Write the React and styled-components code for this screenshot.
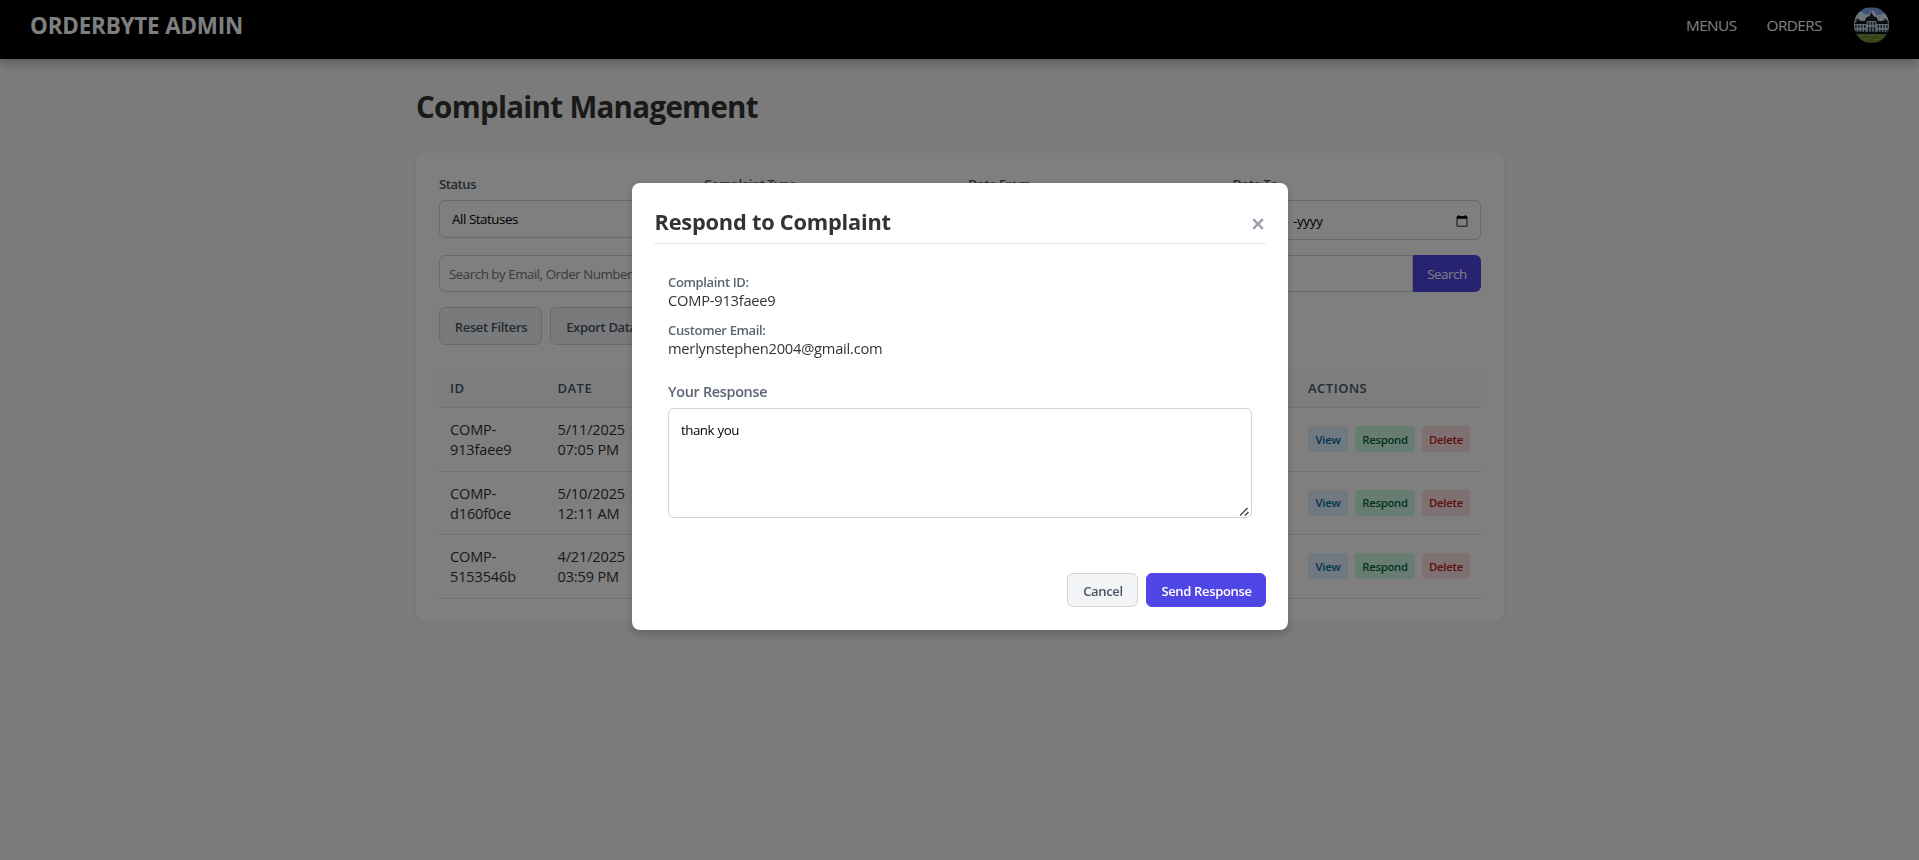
import React from "react";
import styled, { createGlobalStyle } from "styled-components";

const GlobalStyle = createGlobalStyle`
  * { box-sizing: border-box; }
  body {
    margin: 0;
    background: #f7f7f7;
    color: #333;
    font-family: "Open Sans", "Noto Sans", sans-serif;
    overflow: hidden;
  }
  button, input, textarea { font-family: inherit; }
`;

const Header = styled.header`
  display: flex;
  justify-content: space-between;
  height: 59px;
  padding: 7px 30px 16px;
  background: #000;
  box-shadow: 0 4px 10px rgba(0, 0, 0, 0.28);
`;

const Brand = styled.div`
  height: 36px;
  font-size: 22.4px;
  line-height: 38px;
  font-weight: 700;
  letter-spacing: -0.17px;
  color: #fff;
`;

const Nav = styled.nav`
  display: flex;
  align-items: center;
  height: 36px;
`;

const NavLink = styled.a`
  margin-right: ${(p) => p.$gap}px;
  font-size: 15.3px;
  letter-spacing: -0.55px;
  color: #fff;
`;

const Avatar = styled.svg`
  width: 35px;
  height: 36px;
  border-radius: 50%;
`;

const Page = styled.main`
  width: 1088px;
  margin: 0 auto;
  padding-top: 24px;
  position: relative;
  left: 0.5px;
`;

const Title = styled.h1`
  margin: 0 0 22px;
  height: 48px;
  font-size: 29.5px;
  line-height: 47px;
  font-weight: 700;
  letter-spacing: -0.7px;
  color: #333;
`;

const Card = styled.section`
  height: 468px;
  padding: 22px 23px 0;
  border-radius: 8px;
  background: #fff;
  box-shadow: 0 2px 4px rgba(0, 0, 0, 0.09);
`;

const Filters = styled.div`
  display: grid;
  grid-template-columns: repeat(4, 1fr);
  column-gap: 16px;
  height: 65px;
`;

const Field = styled.div`
  display: flex;
  flex-direction: column;
`;

const FieldLabel = styled.label`
  height: 25px;
  font-size: 13px;
  line-height: 18px;
  font-weight: 600;
  letter-spacing: -0.42px;
  color: #4b5563;
`;

const Control = styled.div`
  display: flex;
  align-items: center;
  justify-content: space-between;
  height: ${(p) => (p.$date ? 40 : 38)}px;
  padding: ${(p) => (p.$date ? "1px 12px 0 10px" : "0 12px 0 12px")};
  border: 1px solid #d1d5db;
  border-radius: 6px;
  font-size: 13.3px;
  letter-spacing: ${(p) => (p.$date ? -0.15 : -0.42)}px;
  color: #000;
`;

const DateYear = styled.span`
  margin-left: 5px;
  letter-spacing: -0.25px;
`;

const SearchRow = styled.div`
  display: flex;
  height: 37px;
  margin-top: 15px;
`;

const SearchInput = styled.input`
  flex: 1;
  padding: 0 9px;
  border: 1px solid #d1d5db;
  border-radius: 6px 0 0 6px;
  font-size: 13.3px;
  letter-spacing: -0.46px;
  outline: none;
  &::placeholder { color: #757575; }
`;

const SearchButton = styled.button`
  width: 68px;
  border: 0;
  border-radius: 0 6px 6px 0;
  background: #4f46e5;
  color: #fff;
  font-size: 13.3px;
  letter-spacing: -0.4px;
`;

const ButtonRow = styled.div`
  display: flex;
  gap: 8px;
  margin-top: 15px;
`;

const Button = styled.button`
  width: ${(p) => p.$width}px;
  height: ${(p) => p.$height || 38}px;
  padding: 2px 0 0 1px;
  border: 1px solid ${(p) => (p.$primary ? "#4f46e5" : "#d1d5db")};
  border-radius: 6px;
  background: ${(p) => (p.$primary ? "#4f46e5" : "#f3f4f6")};
  color: ${(p) => (p.$primary ? "#fff" : "#4b5563")};
  font-size: 13px;
  font-weight: 600;
  letter-spacing: -0.34px;
`;

const Table = styled.table`
  width: 100%;
  margin-top: 23px;
  table-layout: fixed;
  border-collapse: collapse;
`;

const Th = styled.th`
  width: ${(p) => (p.$width ? `${p.$width}px` : "auto")};
  height: 39.5px;
  padding: 0 11px;
  border-bottom: 1px solid #e5e7eb;
  background: #f8fafa;
  text-align: left;
  font-size: 13px;
  font-weight: 600;
  letter-spacing: 0.5px;
  color: #4b5563;
`;

const Td = styled.td`
  height: 63.5px;
  padding: ${(p) => (p.$text ? "2px 11px 0" : "0 11px")};
  border-bottom: 1px solid #e5e7eb;
  font-size: 14.5px;
  line-height: 20px;
  letter-spacing: -0.13px;
  color: #333;
`;

const Actions = styled.div`
  display: flex;
  gap: 7px;
`;

const tones = {
  view: ["#e0f2fe", "#0369a1", 40],
  respond: ["#d1fae5", "#065f46", 60],
  delete: ["#fee2e2", "#b91c1c", 48],
};

const ActionButton = styled.button`
  width: ${(p) => tones[p.$tone][2]}px;
  height: 26px;
  padding: 0;
  border: 0;
  border-radius: 4px;
  background: ${(p) => tones[p.$tone][0]};
  color: ${(p) => tones[p.$tone][1]};
  font-size: 11.3px;
  font-weight: 600;
  letter-spacing: -0.25px;
`;

const Overlay = styled.div`
  position: fixed;
  inset: 0;
  display: flex;
  justify-content: center;
  align-items: flex-start;
  padding-top: 183px;
  background: rgba(0, 0, 0, 0.5);
`;

const Modal = styled.div`
  width: 656px;
  height: 447px;
  margin-left: 1px;
  padding: 22px;
  border-radius: 8px;
  background: #fff;
  box-shadow: 0 4px 8px rgba(0, 0, 0, 0.2);
`;

const ModalHeader = styled.div`
  display: flex;
  justify-content: space-between;
  align-items: flex-start;
  height: 39px;
  border-bottom: 1px solid #e5e7eb;
`;

const ModalTitle = styled.h2`
  margin: 0 0 0 0.5px;
  font-size: 21.8px;
  line-height: 34px;
  font-weight: 700;
  letter-spacing: -0.22px;
  color: #333;
`;

const CloseButton = styled.button`
  display: flex;
  padding: 0;
  margin: 13px 2px 0 0;
  border: 0;
  background: none;
`;

const ModalBody = styled.div`
  height: 329px;
  padding: 28px 14px 0;
`;

const Detail = styled.div`
  height: 48px;
`;

const DetailLabel = styled.div`
  font-size: 13px;
  line-height: 20px;
  font-weight: 600;
  letter-spacing: -0.35px;
  color: #5b6472;
`;

const DetailValue = styled.div`
  font-size: 14.7px;
  line-height: 16px;
  letter-spacing: -0.24px;
  color: #333;
`;

const ResponseLabel = styled.label`
  display: block;
  height: 29px;
  margin-top: 11px;
  font-size: 14.4px;
  line-height: 26px;
  font-weight: 600;
  letter-spacing: -0.3px;
  color: #5b6472;
`;

const ResponseField = styled.div`
  position: relative;
  width: 584px;
  height: 110px;
`;

const ResponseBox = styled.textarea`
  display: block;
  width: 100%;
  height: 100%;
  padding: 11px 12px;
  border: 1px solid #d1d5db;
  border-radius: 6px;
  font-size: 13.3px;
  line-height: 20px;
  letter-spacing: -0.5px;
  word-spacing: 0.6px;
  color: #000;
  resize: none;
  outline: none;
`;

const ResizeHandle = styled.svg`
  position: absolute;
  right: 3px;
  bottom: 2px;
`;

const ModalFooter = styled.div`
  display: flex;
  justify-content: flex-end;
  gap: 8px;
`;

const complaints = [
  { id: ["COMP-", "913faee9"], date: ["5/11/2025", "07:05 PM"] },
  { id: ["COMP-", "d160f0ce"], date: ["5/10/2025", "12:11 AM"] },
  { id: ["COMP-", "5153546b"], date: ["4/21/2025", "03:59 PM"] },
];

function CalendarIcon() {
  return (
    <svg width="12" height="12" viewBox="0 0 12 12">
      <rect x="1" y="1.5" width="10" height="9.8" rx="1" fill="none" stroke="#333" strokeWidth="1.1" />
      <path d="M1 1.2h10v2.6H1zM2 0h1.2v1.4H2zM8.8 0H10v1.4H8.8z" fill="#000" />
    </svg>
  );
}

function ProfilePicture() {
  return (
    <Avatar viewBox="0 0 36 36">
      <rect width="36" height="36" fill="#7fa8ea" />
      <path d="M0 7q6-5 10-1t9-4l5 6 12-3v12H0z" fill="#dbe6f5" />
      <path d="M0 14l4-3 3 3zM29 15l3-4 4 4z" fill="#35502f" />
      <path d="M0 16h36v10H0z" fill="#c0d4e8" />
      <path d="M0 17l3-3h8l2-4 3-1 2-4 2 4 3 1 2 4h8l3 3z" fill="#12161e" />
      <path d="M13 13h10v13H13z" fill="#b4cbe2" />
      <path d="M12 14l6-5 6 5z" fill="#1c222c" />
      <path
        d="M2 18v3M5 18v3M8 18v3M11 18v3M15 15v3M18 15v3M21 15v3M25 18v3M28 18v3M31 18v3M34 18v3M2 23v3M5 23v3M8 23v3M11 23v3M15 20v5M18 20v5M21 20v5M25 23v3M28 23v3M31 23v3M34 23v3"
        stroke="#22303f"
        strokeWidth="1.4"
      />
      <path d="M0 25h36v2.4H0z" fill="#10160e" />
      <path d="M0 27.4h36V36H0z" fill="#6d8a2e" />
      <path d="M5 29h5M14 28.5h7M24 30h6M10 32h8M20 33h6" stroke="#97ad55" />
    </Avatar>
  );
}

export default function App() {
  return (
    <>
      <GlobalStyle />
      <Header>
        <Brand>ORDERBYTE ADMIN</Brand>
        <Nav>
          <NavLink $gap={30}>MENUS</NavLink>
          <NavLink $gap={32}>ORDERS</NavLink>
          <ProfilePicture />
        </Nav>
      </Header>
      <Page>
        <Title>Complaint Management</Title>
        <Card>
          <Filters>
            <Field>
              <FieldLabel>Status</FieldLabel>
              <Control>All Statuses</Control>
            </Field>
            <Field>
              <FieldLabel>Complaint Type</FieldLabel>
              <Control />
            </Field>
            <Field>
              <FieldLabel>Date From</FieldLabel>
              <Control $date />
            </Field>
            <Field>
              <FieldLabel>Date To</FieldLabel>
              <Control $date>
                <span>dd-mm<DateYear>-yyyy</DateYear></span>
                <CalendarIcon />
              </Control>
            </Field>
          </Filters>
          <SearchRow>
            <SearchInput placeholder="Search by Email, Order Number, or ID" />
            <SearchButton>Search</SearchButton>
          </SearchRow>
          <ButtonRow>
            <Button $width={103}>Reset Filters</Button>
            <Button $width={102}>Export Data</Button>
          </ButtonRow>
          <Table>
            <thead>
              <tr>
                <Th $width={107.5}>ID</Th>
                <Th $width={107.5}>DATE</Th>
                <Th />
                <Th $width={184}>ACTIONS</Th>
              </tr>
            </thead>
            <tbody>
              {complaints.map((c) => (
                <tr key={c.id[1]}>
                  <Td $text>{c.id[0]}<br />{c.id[1]}</Td>
                  <Td $text>{c.date[0]}<br />{c.date[1]}</Td>
                  <Td />
                  <Td>
                    <Actions>
                      <ActionButton $tone="view">View</ActionButton>
                      <ActionButton $tone="respond">Respond</ActionButton>
                      <ActionButton $tone="delete">Delete</ActionButton>
                    </Actions>
                  </Td>
                </tr>
              ))}
            </tbody>
          </Table>
        </Card>
      </Page>
      <Overlay>
        <Modal>
          <ModalHeader>
            <ModalTitle>Respond to Complaint</ModalTitle>
            <CloseButton aria-label="Close">
              <svg width="12" height="12" viewBox="0 0 12 12">
                <path d="M1.2 1.2l9.6 9.6M10.8 1.2l-9.6 9.6" stroke="#9ca3af" strokeWidth="2.6" />
              </svg>
            </CloseButton>
          </ModalHeader>
          <ModalBody>
            <Detail>
              <DetailLabel>Complaint ID:</DetailLabel>
              <DetailValue>COMP-913faee9</DetailValue>
            </Detail>
            <Detail>
              <DetailLabel>Customer Email:</DetailLabel>
              <DetailValue>merlynstephen2004@gmail.com</DetailValue>
            </Detail>
            <ResponseLabel>Your Response</ResponseLabel>
            <ResponseField>
              <ResponseBox defaultValue="thank you" />
              <ResizeHandle width="10" height="9" viewBox="0 0 10 9">
                <path d="M1 8.5L8.5 1M6 8.5L9.5 5" stroke="#444" strokeWidth="1.3" />
              </ResizeHandle>
            </ResponseField>
          </ModalBody>
          <ModalFooter>
            <Button $width={71} $height={34}>Cancel</Button>
            <Button $width={120} $height={34} $primary>Send Response</Button>
          </ModalFooter>
        </Modal>
      </Overlay>
    </>
  );
}
